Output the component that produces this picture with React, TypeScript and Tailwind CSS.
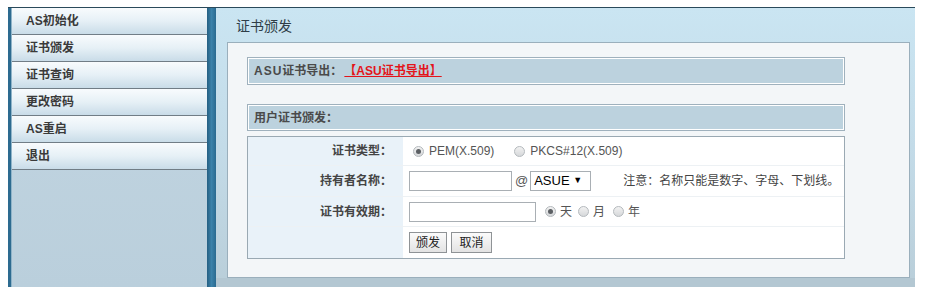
const menu = ["AS初始化", "证书颁发", "证书查询", "更改密码", "AS重启", "退出"];

function Radio({ checked }: { checked?: boolean }) {
  return (
    <span className="inline-flex items-center justify-center w-[11px] h-[11px] rounded-full border border-[#b4b9bd] bg-gradient-to-b from-[#f2f2f2] to-[#d6d8da]">
      {checked && <span className="w-[5px] h-[5px] rounded-full bg-[#5b5f63]" />}
    </span>
  );
}

function Row({ label, children, last, h }: { label?: string; children: React.ReactNode; last?: boolean; h: string }) {
  return (
    <div className={`flex ${h} ${last ? "" : "border-b border-[#edf1f4]"}`}>
      <div className="w-[155px] bg-[#e9f2f9] text-right pr-[11px] flex items-center justify-end font-bold text-[12px] text-[#444]">
        {label}
      </div>
      <div className="flex-1 flex items-center pl-[6px] text-[12px] text-[#555]">{children}</div>
    </div>
  );
}

export default function App() {
  return (
    <div
      className="w-[925px] h-[294px] bg-white pt-[7px] pl-[8px] overflow-hidden"
      style={{ fontFamily: '"Liberation Sans", Arial, "Noto Sans CJK SC", sans-serif' }}
    >
      <div className="flex h-[280px] w-[907px] border-t border-[#2a4a5b]">
        {/* Left: menu */}
        <div className="w-[208px] flex h-full">
          <div className="w-[3px] bg-[#2d6b90]" />
          <div className="w-[1px] bg-[#8fb4c9]" />
          <div className="flex-1 flex flex-col bg-gradient-to-b from-[#c3d6e2] to-[#bacfdc]">
            {menu.map((m) => (
              <div
                key={m}
                className="h-[27px] flex items-center pl-[14px] border-b border-[#717d86] bg-gradient-to-b from-[#f8fbfd] via-[#e6f0f6] to-[#c9dce8] text-[12px] font-bold text-[#3a3a3a]"
              >
                {m}
              </div>
            ))}
          </div>
          <div className="w-[9px] bg-gradient-to-r from-[#255f82] via-[#3b82aa] to-[#2a6a90]" />
        </div>

        {/* Right: content */}
        <div className="flex-1 flex flex-col bg-gradient-to-b from-[#cae5f2] via-[#c3dbe8] to-[#b9ced9]">
          <div className="h-[34px] flex items-center pl-[20px] pt-[2px] text-[14px] text-[#2f3d47]">证书颁发</div>
          <div className="ml-[11px] mr-[5px] h-[236px] border border-[#9aafbc] bg-[#f3f6f8] pt-[14px] pl-[19px]">
            <div className="w-[598px] h-[28px] border border-[#9fb1bd] shadow-[inset_0_0_0_1px_#ffffff] bg-[#bcd2de] flex items-center pl-[6px] text-[12px] font-bold text-[#4a4a4a]">
              <span className="tracking-[1px]">ASU</span>
              <span>证书导出：</span>
              <a className="ml-[2px] text-[#e3151b] underline decoration-[#e3151b]">【ASU证书导出】</a>
            </div>
            <div className="mt-[19px] w-[598px] h-[27px] border border-[#9fb1bd] shadow-[inset_0_0_0_1px_#ffffff] bg-[#bcd2de] flex items-center pl-[6px] text-[12px] font-bold text-[#4a4a4a]">
              用户证书颁发：
            </div>
            <div className="mt-[5px] w-[598px] border border-[#9aa9b3] bg-white">
              <Row label="证书类型：" h="h-[29px]">
                <span className="ml-[4px] flex items-center gap-[5px]">
                  <Radio checked />
                  <span>PEM(X.509)</span>
                </span>
                <span className="ml-[20px] flex items-center gap-[5px]">
                  <Radio />
                  <span>PKCS#12(X.509)</span>
                </span>
              </Row>
              <Row label="持有者名称：" h="h-[31px]">
                <span className="w-[103px] h-[20px] border border-[#a9afb4] bg-white" />
                <span className="ml-[3px] text-[13px]">@</span>
                <span className="ml-[2px] w-[61px] h-[20px] border border-[#a9afb4] bg-white flex items-center justify-between px-[3px] text-[13px] text-black">
                  ASUE<span className="text-[9px] pr-[5px]">▼</span>
                </span>
                <span className="ml-[32px] text-[#444]">注意：名称只能是数字、字母、下划线。</span>
              </Row>
              <Row label="证书有效期：" h="h-[30px]">
                <span className="w-[127px] h-[20px] border border-[#a9afb4] bg-white" />
                <span className="ml-[9px] flex items-center gap-[4px]">
                  <Radio checked />
                  <span>天</span>
                </span>
                <span className="ml-[6px] flex items-center gap-[4px]">
                  <Radio />
                  <span>月</span>
                </span>
                <span className="ml-[8px] flex items-center gap-[4px]">
                  <Radio />
                  <span>年</span>
                </span>
              </Row>
              <Row last h="h-[31px]">
                <button className="w-[38px] h-[21px] border border-[#8f9396] bg-gradient-to-b from-[#fbfbfb] to-[#e3e3e3] text-[12px] text-[#222]">颁发</button>
                <button className="ml-[4px] w-[41px] h-[21px] border border-[#8f9396] bg-gradient-to-b from-[#fbfbfb] to-[#e3e3e3] text-[12px] text-[#222]">取消</button>
              </Row>
            </div>
          </div>
          <div className="flex-1 bg-[#b3c7d2]" />
        </div>
      </div>
    </div>
  );
}
